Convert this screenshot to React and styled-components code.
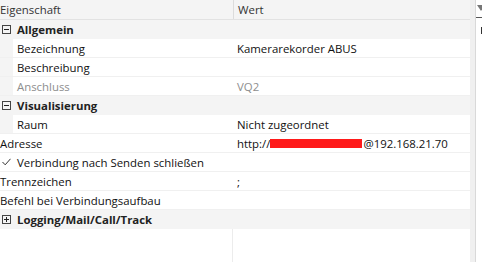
import React from 'react';
import styled, { createGlobalStyle } from 'styled-components';

const Global = createGlobalStyle`
  html, body { margin: 0; padding: 0; background: #fff; }
  body { font-family: "Segoe UI", "Open Sans", "Noto Sans", sans-serif; font-size: 11.4px; color: #111; }
`

const Page = styled.div`
  display: flex;
  width: 482px;
  height: 262px;
  overflow: hidden;
  background: #fff;
`
const Grid = styled.div`
  width: 470px;
  display: flex;
  flex-direction: column;
  background: linear-gradient(to right, transparent 232px, #ececec 232px, #ececec 233px, transparent 233px);
`
const Strip = styled.div`
  width: 5px;
  background: #f0f0f0;
  border-right: 1px solid #d9d9d9;
`
const Side = styled.div`
  position: relative;
  flex: 1;
  background: #fff;
`
const SideArrow = styled.div`
  position: absolute;
  left: 1px;
  top: 5px;
  width: 0;
  height: 0;
  border-left: 4px solid transparent;
  border-right: 4px solid transparent;
  border-top: 6px solid #777;
`
const SideRule = styled.div`
  position: absolute;
  left: 0;
  right: 0;
  top: 17px;
  border-top: 1px solid #555;
`
const SideMark = styled.div`
  position: absolute;
  right: 0;
  top: 27px;
  width: 1px;
  height: 7px;
  background: #333;
`

const Header = styled.div`
  display: flex;
  height: 19px;
  background: #f4f4f4;
  border-bottom: 1px solid #e2e2e2;
  color: #333;
`
const HeadCell = styled.div`
  display: flex;
  align-items: center;
  width: ${p => p.$w ? p.$w + 'px' : 'auto'};
  flex: ${p => p.$w ? 'none' : 1};
  padding-left: ${p => p.$pad || 0}px;
  border-right: ${p => p.$divider ? '1px solid #dcdcdc' : 'none'};
  box-sizing: border-box;
`

const Row = styled.div`
  display: flex;
  height: 18px;
  border-bottom: 1px solid #f0f0f0;
  background: #fff;
`
const Gutter = styled.div`
  width: 13px;
  flex: none;
  background: #f4f4f4;
`
const Name = styled.div`
  display: flex;
  align-items: center;
  flex: none;
  width: ${p => p.$w}px;
  padding-left: ${p => p.$pad}px;
  box-sizing: border-box;
  color: ${p => p.$muted ? '#8e8e8e' : '#111'};
  white-space: nowrap;
  position: relative;
`
const Value = styled.div`
  display: flex;
  align-items: center;
  flex: 1;
  margin-left: 1px;
  padding-left: 4px;
  color: ${p => p.$muted ? '#8e8e8e' : '#111'};
  white-space: nowrap;
`

const GroupRow = styled.div`
  display: flex;
  align-items: center;
  height: 18px;
  border-bottom: 1px solid #f4f4f4;
  background: #f4f4f4;
  font-weight: 700;
  color: #222;
`
const Toggle = styled.div`
  width: 7px;
  height: 7px;
  margin: 0 6px 0 2px;
  border: 1px solid #444;
  position: relative;
  flex: none;
  &::before {
    content: '';
    position: absolute;
    left: 1px; right: 1px; top: 3px;
    height: 1px;
    background: #222;
  }
  &::after {
    content: '';
    display: ${p => p.$closed ? 'block' : 'none'};
    position: absolute;
    top: 1px; bottom: 1px; left: 3px;
    width: 1px;
    background: #222;
  }
`
const Check = styled.svg`
  position: absolute;
  left: 2px;
  top: 5px;
`
const Redact = styled.span`
  display: inline-block;
  width: 92px;
  height: 9px;
  background: #ff1a1a;
  margin: 0 1px 0 0;
`

const Prop = ({ name, value, grouped, muted, children }) => (
  <Row>
    {grouped && <Gutter />}
    <Name $w={grouped ? 219 : 232} $pad={grouped ? 4 : 0} $muted={muted}>{name}</Name>
    <Value $muted={muted}>{children || value}</Value>
  </Row>
)

const Group = ({ title, closed }) => (
  <GroupRow>
    <Toggle $closed={closed} />
    {title}
  </GroupRow>
)

export default function App() {
  return (
    <Page>
      <Global />
      <Grid>
        <Header>
          <HeadCell $w={234} $divider>Eigenschaft</HeadCell>
          <HeadCell $pad={4}>Wert</HeadCell>
        </Header>
        <Group title="Allgemein" />
        <Prop grouped name="Bezeichnung" value="Kamerarekorder ABUS" />
        <Prop grouped name="Beschreibung" value="" />
        <Prop grouped muted name="Anschluss" value="VQ2" />
        <Group title="Visualisierung" />
        <Prop grouped name="Raum" value="Nicht zugeordnet" />
        <Prop name="Adresse">
          http://<Redact />@192.168.21.70
        </Prop>
        <Row>
          <Name $w={232} $pad={17}>
            <Check width="9" height="8" viewBox="0 0 9 8">
              <path d="M0.5 4 L3.2 6.8 L8.5 0.8" fill="none" stroke="#333" strokeWidth="1" />
            </Check>
            Verbindung nach Senden schließen
          </Name>
          <Value />
        </Row>
        <Prop name="Trennzeichen" value=";" />
        <Prop name="Befehl bei Verbindungsaufbau" value="" />
        <Group title="Logging/Mail/Call/Track" closed />
      </Grid>
      <Strip />
      <Side>
        <SideArrow />
        <SideRule />
        <SideMark />
      </Side>
    </Page>
  );
}
